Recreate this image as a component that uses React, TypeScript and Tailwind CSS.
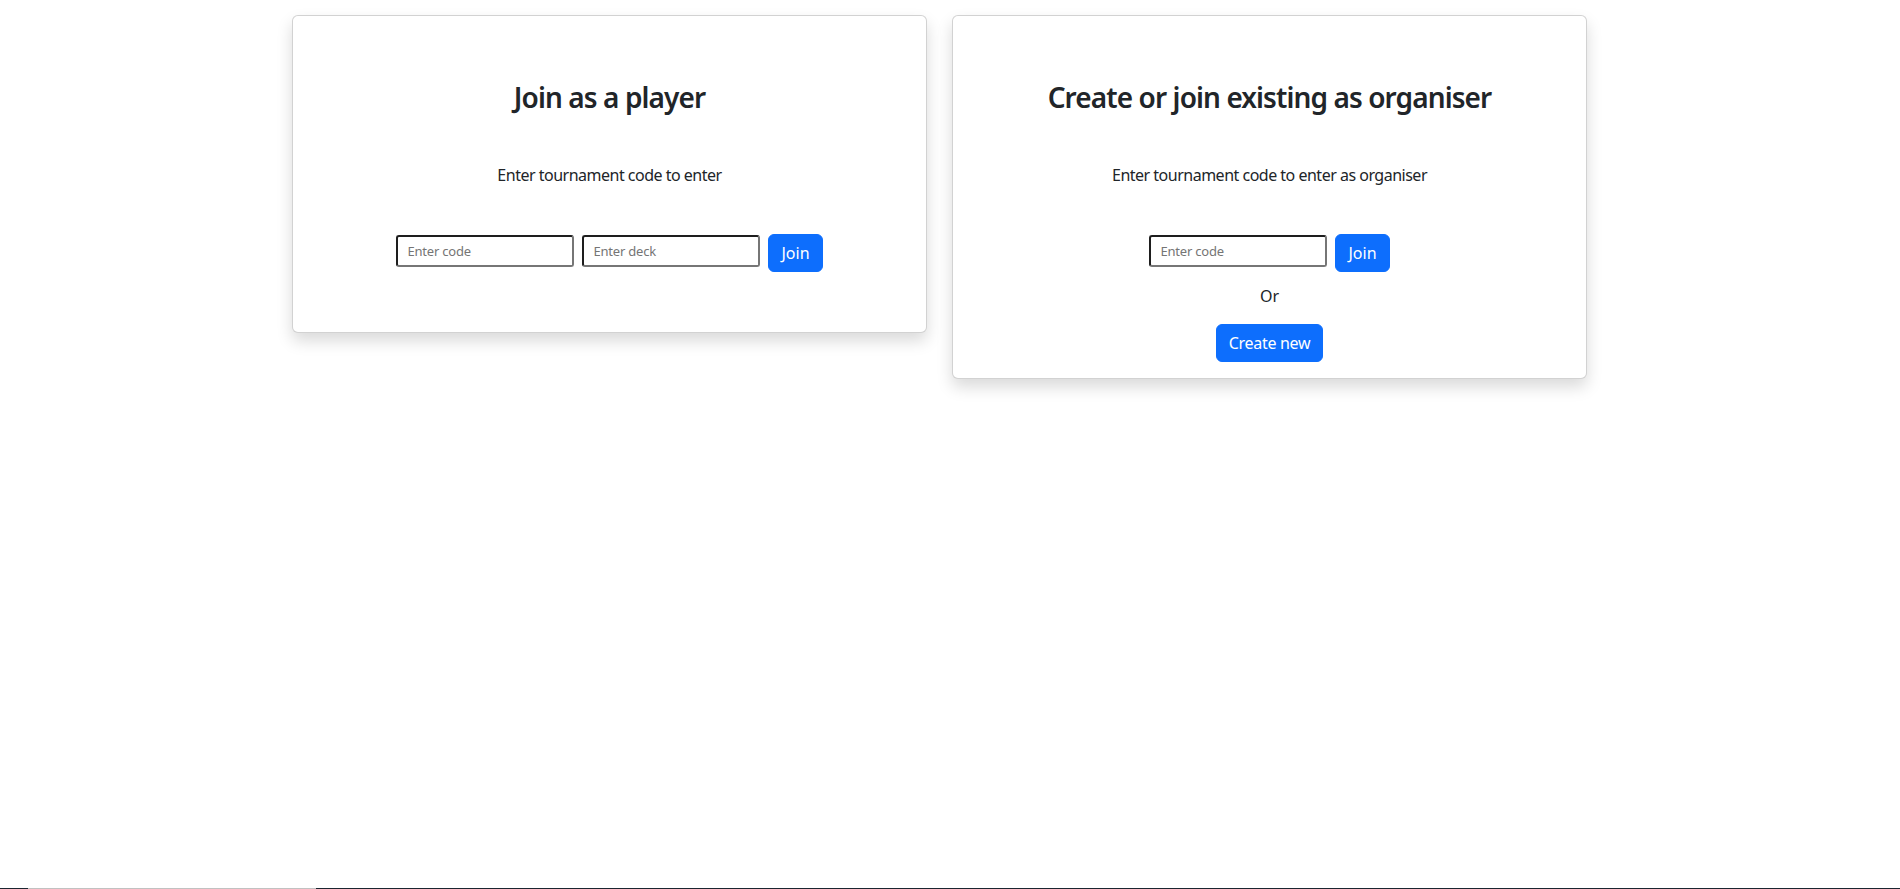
import React from "react";

const inputClass =
  "mt-px h-[32px] w-[178px] rounded-[3px] border-2 border-t-[#1e1e1e] border-l-[#1e1e1e] border-b-[#767676] border-r-[#767676] bg-white pl-[9px] text-[13px] tracking-[-0.2px] text-[#212529] placeholder:text-[#757575] outline-none";

const buttonClass =
  "h-[38px] rounded-[6px] border border-[#0d6efd] bg-[#0d6efd] px-3 text-base leading-6 text-white";

function Card({ children }: { children: React.ReactNode }) {
  return (
    <div className="flex w-[635px] flex-col items-center rounded-[6px] border border-[rgba(0,0,0,0.175)] bg-white text-center shadow-[0_8px_16px_rgba(0,0,0,0.15)]">
      {children}
    </div>
  );
}

export default function App() {
  return (
    <div className="flex h-[889px] flex-col bg-white font-['Segoe_UI','Noto_Sans',sans-serif] text-[#212529]">
      <div className="mx-auto flex w-[1320px] items-start gap-[25px] pl-[2px] pt-[15px]">
        <Card>
          <h3 className="mt-[65px] text-[28px] font-semibold leading-[1.2] tracking-[-0.9px]">Join as a player</h3>
          <p className="mt-[48px] text-base leading-6 tracking-[-0.5px]">Enter tournament code to enter</p>
          <div className="mb-[60px] mt-[47px] flex items-start gap-2">
            <input className={inputClass} placeholder="Enter code" />
            <input className={inputClass} placeholder="Enter deck" />
            <button className={buttonClass}>Join</button>
          </div>
        </Card>

        <Card>
          <h3 className="mt-[65px] text-[28px] font-semibold leading-[1.2] tracking-[-0.9px]">
            Create or join existing as organiser
          </h3>
          <p className="mt-[48px] text-base leading-6 tracking-[-0.5px]">
            Enter tournament code to enter as organiser
          </p>
          <div className="mt-[47px] flex items-start gap-2">
            <input className={inputClass} placeholder="Enter code" />
            <button className={buttonClass}>Join</button>
          </div>
          <p className="mt-[12px] text-base leading-6">Or</p>
          <button className={buttonClass + " mb-[16px] mt-[16px] tracking-[-0.3px]"}>Create new</button>
        </Card>
      </div>

      <div className="mt-auto flex h-px">
        <div className="w-[28px] bg-[#1b2631]" />
        <div className="w-[288px] bg-[#c1c1c1]" />
        <div className="flex-1 bg-[#1b2631]" />
      </div>
    </div>
  );
}
